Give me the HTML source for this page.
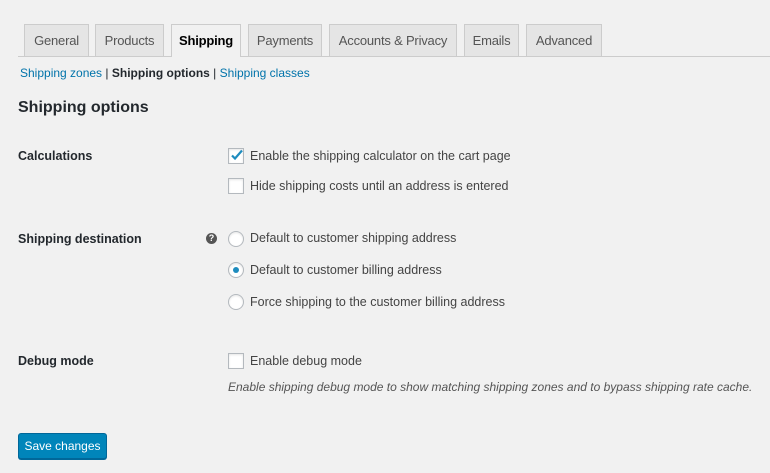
<!DOCTYPE html>
<html><head><style>
body{margin:0;width:770px;height:473px;background:#f1f1f1;font-family:"Liberation Sans",sans-serif;color:#23282d;position:relative;overflow:hidden;font-size:12.5px}
.a{position:absolute;white-space:nowrap}
.tab{position:absolute;top:24px;height:32px;background:#e5e5e5;border:1px solid #ccc;border-bottom:none;font-size:13px;color:#555;text-align:center;line-height:32px;box-sizing:border-box;white-space:nowrap;letter-spacing:-0.2px}
.tab.on{background:#f1f1f1;color:#000;height:33px;font-weight:bold}
.line{position:absolute;left:18px;right:0;top:56px;border-top:1px solid #ccc}
.lnk{color:#0073aa}
.cb{position:absolute;width:16px;height:16px;border:1px solid #b4b9be;background:#fff;box-sizing:border-box;box-shadow:inset 0 1px 2px rgba(0,0,0,.1)}
.rd{position:absolute;width:16px;height:16px;border:1px solid #b4b9be;background:#fff;box-sizing:border-box;border-radius:50%;box-shadow:inset 0 1px 2px rgba(0,0,0,.1)}
.lbl{font-weight:bold;font-size:12.5px}
.txt{color:#444}
</style></head><body>
<div class="tab" style="left:24px;width:65px">General</div>
<div class="tab" style="left:95px;width:69px">Products</div>
<div class="line"></div>
<div class="tab on" style="left:171px;width:70px">Shipping</div>
<div class="tab" style="left:248px;width:74px">Payments</div>
<div class="tab" style="left:329px;width:128px">Accounts &amp; Privacy</div>
<div class="tab" style="left:464px;width:55px">Emails</div>
<div class="tab" style="left:526px;width:76px">Advanced</div>

<div class="a" style="left:20px;top:66px;font-size:12px"><span class="lnk">Shipping zones</span> | <b>Shipping options</b> | <span class="lnk">Shipping classes</span></div>
<div class="a" style="left:18px;top:99px;font-size:16px;font-weight:bold">Shipping options</div>

<div class="a lbl" style="left:18px;top:149px">Calculations</div>
<div class="cb" style="left:228px;top:148px"></div>
<svg class="a" style="left:228px;top:146px" width="18" height="18" viewBox="0 0 18 18"><path d="M4 9.5l3 3 7-8" stroke="#1e8cbe" stroke-width="2.2" fill="none"/></svg>
<div class="a txt" style="left:250px;top:149px">Enable the shipping calculator on the cart page</div>
<div class="cb" style="left:228px;top:178px"></div>
<div class="a txt" style="left:250px;top:179px">Hide shipping costs until an address is entered</div>

<div class="a lbl" style="left:18px;top:232px">Shipping destination</div>
<div class="a" style="left:206px;top:233px;width:11px;height:11px;border-radius:50%;background:#555;color:#fff;font-size:9px;font-weight:bold;text-align:center;line-height:11px">?</div>
<div class="rd" style="left:228px;top:231px"></div>
<div class="a txt" style="left:250px;top:231px">Default to customer shipping address</div>
<div class="rd" style="left:228px;top:262px"></div>
<div class="a" style="left:233px;top:267px;width:6px;height:6px;border-radius:50%;background:#1e8cbe"></div>
<div class="a txt" style="left:250px;top:263px">Default to customer billing address</div>
<div class="rd" style="left:228px;top:294px"></div>
<div class="a txt" style="left:250px;top:295px">Force shipping to the customer billing address</div>

<div class="a lbl" style="left:18px;top:354px">Debug mode</div>
<div class="cb" style="left:228px;top:353px"></div>
<div class="a txt" style="left:250px;top:354px">Enable debug mode</div>
<div class="a" style="left:228px;top:380px;font-style:italic;color:#555;font-size:12px">Enable shipping debug mode to show matching shipping zones and to bypass shipping rate cache.</div>

<div class="a" style="left:18px;top:433px;width:89px;height:26px;background:#0085ba;border:1px solid #006799;box-sizing:border-box;border-radius:3px;color:#fff;font-size:12px;text-align:center;line-height:24px;box-shadow:0 1px 0 #006799">Save changes</div>
</body></html>
